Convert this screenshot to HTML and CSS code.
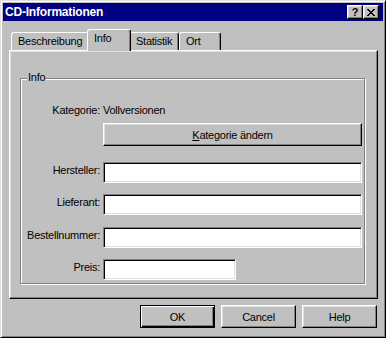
FILE: index.html
```html
<!DOCTYPE html>
<html lang="de">
<head>
    <meta charset="UTF-8">
    <title>CD-Informationen</title>
    <link rel="stylesheet" href="styles.css">
</head>
<body>
    <div class="window">
        <div class="titlebar">
            <span class="title">CD-Informationen</span>
            <div class="title-buttons">
                <button class="tbtn">?</button>
                <button class="tbtn">
                    <svg width="8" height="7" viewBox="0 0 8 7"><path d="M0 0h2v1H0zM6 0h2v1H6zM1 1h2v1H1zM5 1h2v1H5zM2 2h4v1H2zM3 3h2v1H3zM2 4h4v1H2zM1 5h2v1H1zM5 5h2v1H5zM0 6h2v1H0zM6 6h2v1H6z" fill="#000"/></svg>
                </button>
            </div>
        </div>

        <div class="content">
            <div class="tabs">
                <div class="tab tab-beschreibung">Beschreibung</div>
                <div class="tab tab-info active">Info</div>
                <div class="tab tab-statistik">Statistik</div>
                <div class="tab tab-ort">Ort</div>
            </div>

            <div class="panel">
                <div class="group">
                    <span class="group-label">Info</span>

                    <div class="row row-kat">
                        <span class="label">Kategorie:</span>
                        <span>Vollversionen</span>
                    </div>
                    <div class="row row-btn">
                        <span class="label"></span>
                        <button class="button wide"><u>K</u>ategorie ändern</button>
                    </div>
                    <div class="row row-first">
                        <span class="label">Hersteller:</span>
                        <input class="field" type="text">
                    </div>
                    <div class="row row-next">
                        <span class="label">Lieferant:</span>
                        <input class="field" type="text">
                    </div>
                    <div class="row row-bestell">
                        <span class="label">Bestellnummer:</span>
                        <input class="field" type="text">
                    </div>
                    <div class="row row-next">
                        <span class="label">Preis:</span>
                        <input class="field short" type="text">
                    </div>
                </div>
            </div>

            <div class="actions">
                <button class="button default">OK</button>
                <button class="button">Cancel</button>
                <button class="button">Help</button>
            </div>
        </div>
    </div>
</body>
</html>
```

FILE: styles.css
```css
body {
    margin: 0;
    background: #c0c0c0;
    font-family: "Liberation Sans", Arial, sans-serif;
    font-size: 11px;
    line-height: 13px;
    letter-spacing: -0.25px;
    color: #000;
}
.window {
    box-sizing: border-box;
    width: 386px;
    height: 338px;
    padding: 2px;
    background: #c0c0c0;
    border: 1px solid;
    border-color: #dfdfdf #000 #000 #dfdfdf;
    box-shadow: inset 1px 1px #fff, inset -1px -1px #808080;
}
.titlebar {
    display: flex;
    justify-content: space-between;
    height: 18px;
    padding: 0 4px 0 2px;
    background: #000080;
}
.title {
    color: #fff;
    font-weight: bold;
    font-size: 12px;
    line-height: 18px;
    letter-spacing: -0.2px;
}
.title-buttons {
    display: flex;
    margin-top: 2px;
}
.tbtn {
    box-sizing: border-box;
    display: flex;
    align-items: center;
    justify-content: center;
    width: 16px;
    height: 14px;
    padding: 0;
    background: #c0c0c0;
    border: 1px solid;
    border-color: #fff #000 #000 #fff;
    box-shadow: inset -1px -1px #808080, inset 1px 1px #dfdfdf;
    font-family: "Liberation Sans", Arial, sans-serif;
    font-weight: bold;
    font-size: 11px;
    line-height: 12px;
    color: #000;
}
.content {
    padding: 8px 0 0 6px;
}
.tabs {
    display: flex;
    align-items: flex-end;
    height: 21px;
    margin-left: 2px;
}
.tab {
    position: relative;
    box-sizing: border-box;
    height: 18px;
    padding: 2px 0 0 6px;
    border: 1px solid;
    border-bottom: none;
    border-color: #fff #000 transparent #fff;
    border-radius: 3px 3px 0 0;
    box-shadow: inset -1px 0 #808080;
    background: #c0c0c0;
    white-space: nowrap;
}
.tab-beschreibung { width: 78px; }
.tab-info { width: 40px; }
.tab-statistik { width: 50px; }
.tab-ort { width: 42px; }
.tab.active {
    z-index: 2;
    width: 44px;
    height: 22px;
    margin: 0 -2px -1px;
}
.panel {
    box-sizing: border-box;
    width: 369px;
    height: 249px;
    padding: 27px 0 0 10px;
    border: 1px solid;
    border-color: #fff #000 #000 #fff;
    box-shadow: inset -1px -1px #808080, inset 1px 1px #dfdfdf;
}
.group {
    position: relative;
    box-sizing: border-box;
    width: 345px;
    height: 206px;
    padding-top: 25px;
    border: 1px solid #808080;
    box-shadow: inset 1px 1px #fff, 1px 1px #fff;
}
.group-label {
    position: absolute;
    top: -8px;
    left: 6px;
    padding: 0 1px;
    background: #c0c0c0;
}
.row {
    display: flex;
    align-items: flex-start;
    gap: 3px;
}
.label {
    flex: none;
    width: 79px;
    padding-top: 2px;
    text-align: right;
    white-space: nowrap;
}
.row-kat .label { padding-top: 0; }
.row-btn { margin-top: 6px; }
.row-first { margin-top: 16px; }
.row-next { margin-top: 11px; }
.row-bestell { margin-top: 12px; }
.field {
    box-sizing: border-box;
    width: 259px;
    height: 21px;
    margin: 0;
    padding: 0 3px;
    background: #fff;
    border: 1px solid;
    border-color: #808080 #fff #fff #808080;
    box-shadow: inset 1px 1px #000, inset -1px -1px #dfdfdf;
    font: inherit;
    outline: none;
}
.field.short { width: 133px; }
.button {
    box-sizing: border-box;
    width: 75px;
    height: 23px;
    padding: 0;
    background: #c0c0c0;
    border: 1px solid;
    border-color: #fff #000 #000 #fff;
    box-shadow: inset -1px -1px #808080, inset 1px 1px #dfdfdf;
    font-family: "Liberation Sans", Arial, sans-serif;
    font-size: 11px;
    letter-spacing: -0.25px;
    color: #000;
}
.button.wide { width: 259px; }
.button.default {
    border-color: #000;
    box-shadow: inset 1px 1px #fff, inset -1px -1px #000, inset -2px -2px #808080;
}
.actions {
    box-sizing: border-box;
    display: flex;
    justify-content: flex-end;
    gap: 6px;
    width: 369px;
    margin-top: 6px;
    padding-right: 1px;
}
```
